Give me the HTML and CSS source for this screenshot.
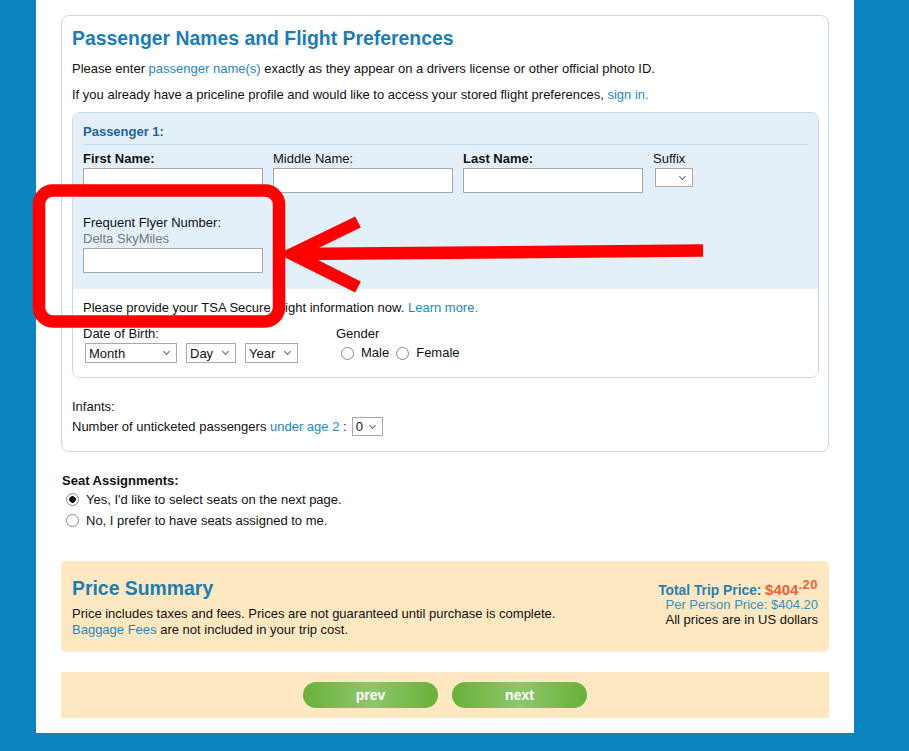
FILE: index.html
```html
<!DOCTYPE html>
<html>
<head>
<meta charset="utf-8">
<title>Passenger Names and Flight Preferences</title>
<link rel="stylesheet" href="styles.css">
</head>
<body>
<div class="page">
  <div class="panel">
    <h1 class="title">Passenger Names and Flight Preferences</h1>
    <p class="intro">Please enter <a class="lnk">passenger name(s)</a> exactly as they appear on a drivers license or other official photo ID.</p>
    <p class="intro">If you already have a priceline profile and would like to access your stored flight preferences, <a class="lnk">sign in.</a></p>

    <div class="pax">
      <div class="pax-top">
        <div class="pax-head">Passenger 1:</div>
        <div class="names">
          <div class="field">
            <div class="lbl bold">First Name:</div>
            <input class="txt" type="text">
          </div>
          <div class="field">
            <div class="lbl">Middle Name:</div>
            <input class="txt" type="text">
          </div>
          <div class="field">
            <div class="lbl bold">Last Name:</div>
            <input class="txt" type="text">
          </div>
          <div class="field">
            <div class="lbl">Suffix</div>
            <span class="sel sel-suffix"><select><option></option></select></span>
          </div>
        </div>
        <div class="ff">
          <div class="lbl">Frequent Flyer Number:</div>
          <div class="lbl muted">Delta SkyMiles</div>
          <input class="txt" type="text">
        </div>
      </div>
      <div class="pax-bottom">
        <p class="tsa">Please provide your TSA Secure Flight information now. <a class="lnk">Learn more.</a></p>
        <div class="tsa-row">
          <div class="dob">
            <div class="lbl">Date of Birth:</div>
            <div class="ctl-row">
              <span class="sel sel-month"><select><option>Month</option></select></span>
              <span class="sel sel-day"><select><option>Day</option></select></span>
              <span class="sel sel-year"><select><option>Year</option></select></span>
            </div>
          </div>
          <div class="gender">
            <div class="lbl">Gender</div>
            <div class="ctl-row radios">
              <label class="opt"><input class="radio" type="radio" name="g"><span>Male</span></label>
              <label class="opt"><input class="radio" type="radio" name="g"><span>Female</span></label>
            </div>
          </div>
        </div>
      </div>
    </div>

    <div class="infants">
      <div class="lbl">Infants:</div>
      <div class="inf-row">
        <span>Number of unticketed passengers <a class="lnk">under age 2</a> :</span>
        <span class="sel sel-inf"><select><option>0</option></select></span>
      </div>
    </div>
  </div>

  <div class="seats">
    <div class="lbl bold">Seat Assignments:</div>
    <label class="seat-opt"><input class="radio" type="radio" name="s" checked><span>Yes, I'd like to select seats on the next page.</span></label>
    <label class="seat-opt"><input class="radio" type="radio" name="s"><span>No, I prefer to have seats assigned to me.</span></label>
  </div>

  <div class="price">
    <div class="price-left">
      <h2 class="price-title">Price Summary</h2>
      <div class="price-text">Price includes taxes and fees. Prices are not guaranteed until purchase is complete.</div>
      <div class="price-text"><a class="lnk">Baggage Fees</a> are not included in your trip cost.</div>
    </div>
    <div class="price-right">
      <div class="pr-row total"><span class="total-lbl">Total Trip Price:</span> <span class="amt">$404</span><span class="cents">.20</span></div>
      <div class="pr-row per">Per Person Price: $404.20</div>
      <div class="pr-row">All prices are in US dollars</div>
    </div>
  </div>

  <div class="nav">
    <button class="btn" type="button">prev</button>
    <button class="btn" type="button">next</button>
  </div>
</div>

<svg class="annot" width="909" height="751" viewBox="0 0 909 751">
  <rect x="39" y="190.5" width="240" height="131" rx="14" ry="14" fill="none" stroke="#ff0000" stroke-width="12.5"/>
  <line x1="703" y1="250.5" x2="292" y2="254" stroke="#ff0000" stroke-width="12.5"/>
  <polyline points="358,222 292,254 358,287" fill="none" stroke="#ff0000" stroke-width="12.5" stroke-linejoin="miter"/>
</svg>
</body>
</html>
```

FILE: styles.css
```css
* { box-sizing: border-box; }

html, body {
  margin: 0;
  padding: 0;
}

body {
  background: #0b83bf;
  font-family: "Liberation Sans", Arial, sans-serif;
  font-size: 13px;
  line-height: 16px;
  color: #111;
  position: relative;
  min-height: 751px;
}

.page {
  margin-left: 36px;
  width: 818px;
  background: #fff;
  padding: 15px 25px 15px 25px;
}

.lnk {
  color: #1f87bd;
  text-decoration: none;
}

.bold { font-weight: bold; }

.panel {
  border: 1px solid #c3dbe8;
  border-radius: 8px;
  padding: 10px 9px 15px 10px;
}

.title {
  margin: 0;
  font-size: 19.4px;
  line-height: 24px;
  font-weight: bold;
  color: #1b7db5;
}

.intro {
  margin: 11px 0 0;
}

.intro + .intro {
  margin-top: 10px;
}

.pax {
  margin-top: 9px;
  border: 1px solid #c3dbe8;
  border-radius: 8px;
  overflow: hidden;
}

.pax-top {
  background: #e3f0f9;
  padding: 0 10px 16px;
}

.pax-head {
  padding: 11px 0 4px;
  border-bottom: 1px solid #c3dbe8;
  font-weight: bold;
  color: #22629b;
}

.names {
  display: flex;
  gap: 10px;
  margin-top: 6px;
}

.field {
  display: flex;
  flex-direction: column;
  align-items: flex-start;
}

.lbl {
  line-height: 16px;
}

.txt {
  display: block;
  margin: 1px 0 0;
  width: 180px;
  height: 25px;
  border: 1px solid #a8a8a8;
  background: #fff;
  padding: 0 3px;
  font: 13px "Liberation Sans", Arial, sans-serif;
  border-radius: 0;
  outline: none;
}

.sel {
  position: relative;
  display: inline-block;
  height: 20px;
}

.sel select {
  -webkit-appearance: none;
  appearance: none;
  width: 100%;
  height: 100%;
  margin: 0;
  border: 1px solid #a8a8a8;
  border-radius: 0;
  background: #fff;
  color: #111;
  font: 13px "Liberation Sans", Arial, sans-serif;
  padding: 0 0 0 3px;
  outline: none;
}

.sel::after {
  content: "";
  position: absolute;
  right: 8px;
  top: 6px;
  width: 4px;
  height: 4px;
  border-right: 1.5px solid #666;
  border-bottom: 1.5px solid #666;
  transform: rotate(45deg);
  pointer-events: none;
}

.sel-suffix {
  width: 38px;
  height: 19px;
  margin: 1px 0 0 2px;
}

.ff {
  margin-top: 22px;
}

.muted { color: #777; }

.pax-bottom {
  padding: 11px 10px 14px;
  background: #fff;
}

.tsa { margin: 0; }

.tsa-row {
  display: flex;
  margin-top: 10px;
}

.dob { width: 253px; }

.ctl-row {
  display: flex;
  align-items: center;
  margin-top: 1px;
  height: 20px;
}

.dob .ctl-row { padding-left: 2px; gap: 9px; }

.sel-month { width: 92px; }
.sel-day { width: 50px; }
.sel-year { width: 53px; }

.radios { padding-left: 5px; gap: 7px; }

.opt {
  display: flex;
  align-items: center;
  gap: 7px;
}

.radio {
  -webkit-appearance: none;
  appearance: none;
  margin: 0;
  width: 13px;
  height: 13px;
  border: 1px solid #8a8a8a;
  border-radius: 50%;
  background: #fff;
  flex: none;
}

.radio:checked {
  background: radial-gradient(circle, #111 0, #111 3px, #fff 3.6px);
}

.infants {
  margin-top: 21px;
}

.inf-row {
  display: flex;
  align-items: center;
  height: 19px;
  margin-top: 2px;
  gap: 5px;
}

.sel-inf {
  width: 31px;
  height: 19px;
}

.seats {
  margin-top: 21px;
  padding-left: 1px;
}

.seat-opt {
  display: flex;
  align-items: center;
  height: 21px;
  padding-left: 4px;
  gap: 7px;
}

.price {
  margin-top: 30px;
  background: #fde8c1;
  border-radius: 5px;
  padding: 15px 11px 14px 11px;
  display: flex;
  justify-content: space-between;
  align-items: flex-start;
}

.price-title {
  margin: 0 0 6px;
  font-size: 19.4px;
  line-height: 24px;
  font-weight: bold;
  color: #1b7db5;
}

.price-right {
  margin-top: 6px;
  text-align: right;
}

.pr-row {
  height: 15px;
  line-height: 15px;
}

.total {
  font-weight: bold;
  color: #2a80ae;
}

.total-lbl {
  font-size: 13.8px;
}

.amt {
  font-size: 15px;
  color: #e7633a;
}

.cents {
  font-size: 13px;
  letter-spacing: 0.5px;
  color: #e7633a;
  vertical-align: 6px;
  line-height: 0;
}

.per { color: #3291c3; }

.nav {
  margin-top: 20px;
  background: #fde8c1;
  padding: 10px 0;
  display: flex;
  justify-content: center;
  gap: 14px;
}

.btn {
  width: 135px;
  height: 26px;
  border: none;
  border-radius: 13px;
  background: linear-gradient(90deg, #69b13a 0%, #8fc66c 50%, #69b13a 100%);
  color: #fff;
  font: bold 14px "Liberation Sans", Arial, sans-serif;
  padding: 0;
}

.annot {
  position: absolute;
  left: 0;
  top: 0;
  pointer-events: none;
}
```
